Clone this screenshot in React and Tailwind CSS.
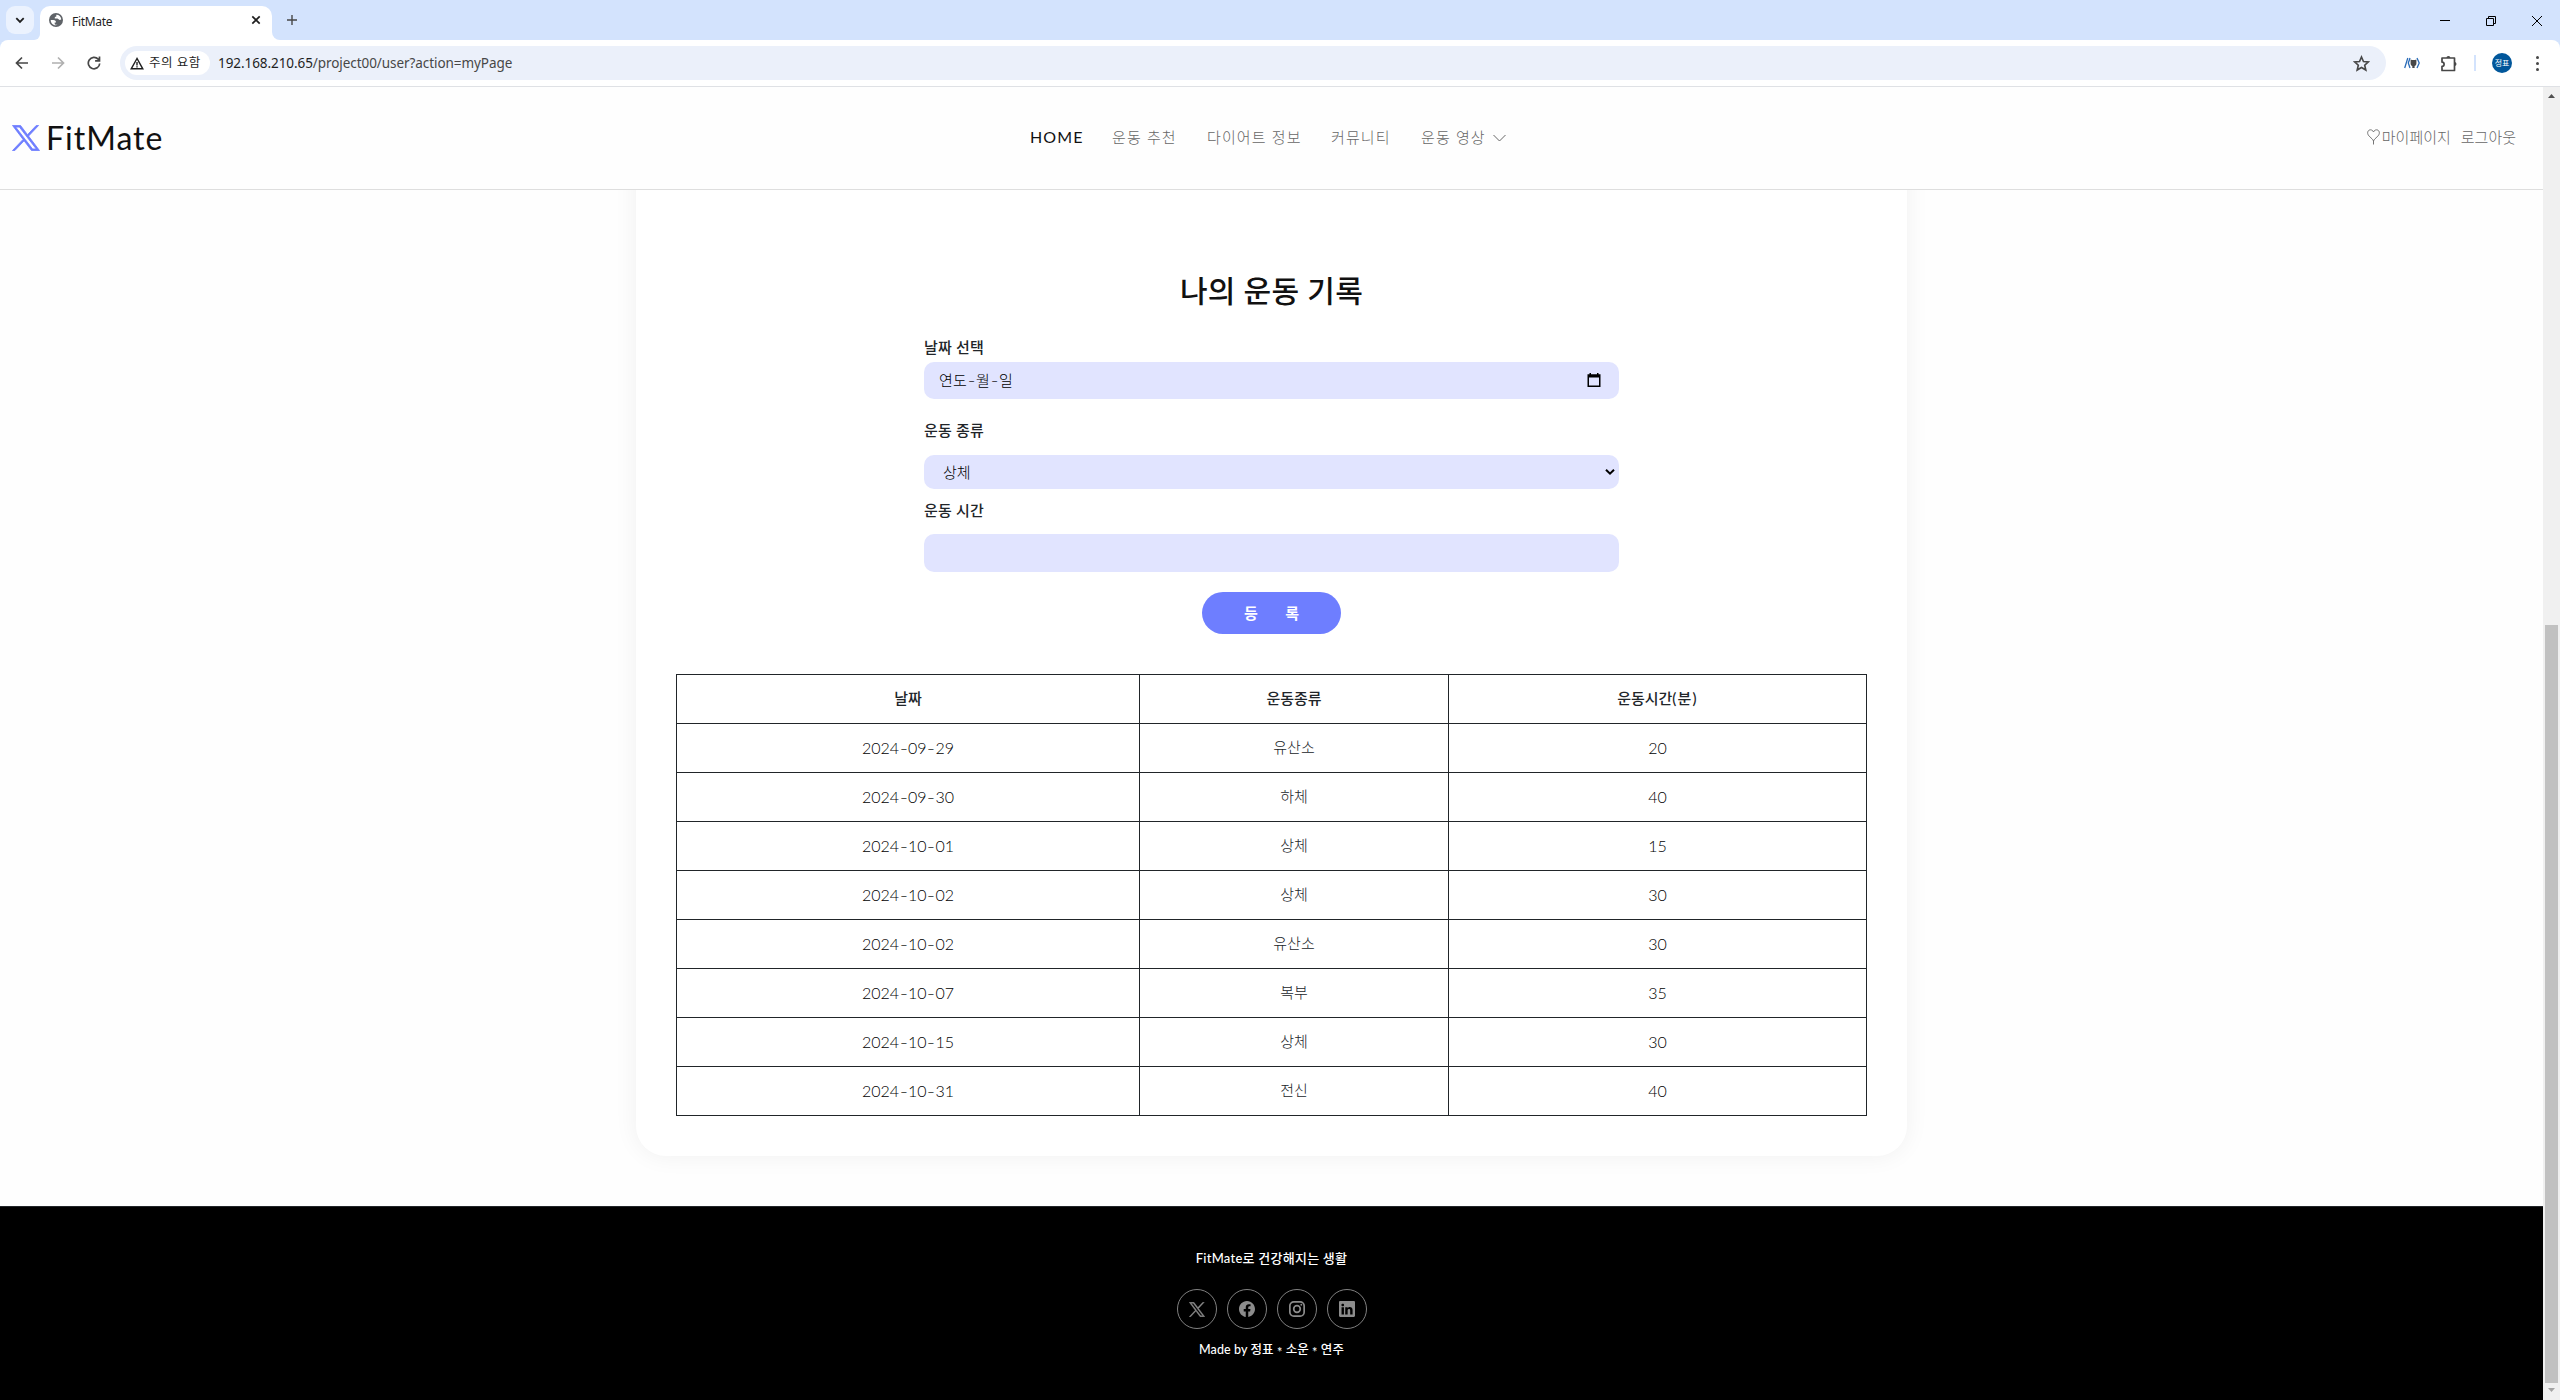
const rows = [
  ["2024-09-29", "유산소", "20"],
  ["2024-09-30", "하체", "40"],
  ["2024-10-01", "상체", "15"],
  ["2024-10-02", "상체", "30"],
  ["2024-10-02", "유산소", "30"],
  ["2024-10-07", "복부", "35"],
  ["2024-10-15", "상체", "30"],
  ["2024-10-31", "전신", "40"],
];

const X_PATH =
  "M14.095479,10.316482L22.286354,1h-1.940718l-7.115352,8.087682L7.551414,1H1l8.589488,12.231093L1,23h1.940717l7.509372,-8.542861L16.448587,23H23L14.095479,10.316482zM11.436522,13.338465l-0.871624,-1.218704l-6.924311,-9.68815h2.981339l5.58978,7.82155l0.867949,1.218704l7.26506,10.166271h-2.981339L11.436522,13.338465z";

function XLogo({ className }) {
  return (
    <svg viewBox="0.6 0.6 22.8 22.8" preserveAspectRatio="none" className={className} fill="currentColor" stroke="currentColor" strokeWidth="0.7">
      <path d={X_PATH} />
    </svg>
  );
}

function Globe() {
  return (
    <svg viewBox="0 0 14 14" className="h-[14px] w-[14px] shrink-0">
      <circle cx="7" cy="7" r="7" fill="#5f6368" />
      <path
        d="M7.300 1.700C9.800 1.600 12 3.600 12.300 6.200c-.8.900-2.100.9-2.700.1-.5-.7-.9-.9-1.700-.9H5.800c-.3-1.300.4-1.900 1.600-2-.1-.7-.2-1.100-.1-1.700zM1.700 6.900h2.700c1.800 0 2.700.8 2.600 2.700H5.700v1.700c.9.500 2 .7 3.100.3C6.500 13.300 1.700 11.300 1.700 6.900z"
        fill="white"
      />
    </svg>
  );
}

function TabStrip() {
  return (
    <div className="flex h-10 items-end bg-[#d3e3fd] pl-1.5">
      <div className="mb-1.5 flex h-7 w-7 items-center justify-center rounded-[9px] bg-[#ebf2fe]">
        <svg viewBox="0 0 10 10" className="h-[10px] w-[10px]" fill="none" stroke="#1f1f1f" strokeWidth="1.8">
          <path d="M1.300 3.200 5 6.900l3.700-3.700" />
        </svg>
      </div>
      <div className="flex h-[34px] w-1.5 items-end bg-white">
        <div className="h-[34px] w-1.5 rounded-br-md bg-[#d3e3fd]" />
      </div>
      <div className="flex h-[34px] w-[232px] items-center rounded-t-[10px] bg-white pl-[9px] pr-[9px] pb-1.5">
        <Globe />
        <span className="ml-[9px] mt-[3px] text-[12px] tracking-[-0.3px] text-[#1f1f1f]">FitMate</span>
        <svg viewBox="0 0 10 10" className="ml-auto mr-[2px] h-[10px] w-[10px]" fill="none" stroke="#1f1f1f" strokeWidth="1.7">
          <path d="m1.300 1.300 7.400 7.400M8.700 1.300 1.300 8.700" />
        </svg>
      </div>
      <div className="h-[34px] w-2 bg-white">
        <div className="h-[34px] w-2 rounded-bl-lg bg-[#d3e3fd]" />
      </div>
      <svg viewBox="0 0 10 10" className="ml-[7px] mb-[15px] h-[10px] w-[10px]" fill="none" stroke="#474747" strokeWidth="1.400">
        <path d="M5 0v10M0 5h10" />
      </svg>
      <div className="ml-auto mb-[14px] flex items-center pr-[18px] text-black">
        <svg viewBox="0 0 10 11" className="mr-[36px] h-[11px] w-[10px]" fill="none" stroke="currentColor">
          <path d="M0 5.500h10" />
        </svg>
        <svg viewBox="0 0 10 10" className="mr-[36px] h-[10px] w-[10px]" fill="none" stroke="currentColor">
          <path d="M.5 2.500h7v7h-7zM2.500 2.500v-2h7v7h-2" />
        </svg>
        <svg viewBox="0 0 10 10" className="h-[10px] w-[10px]" fill="none" stroke="currentColor">
          <path d="m0 0 10 10M10 0 0 10" />
        </svg>
      </div>
    </div>
  );
}

function Toolbar() {
  return (
    <div className="bg-[#d3e3fd]">
      <div className="flex h-[46px] items-center rounded-t-lg bg-white pl-[15px] pr-[21px] text-[#474747]">
        <svg viewBox="0 0 14 14" className="h-[14px] w-[14px]" fill="none" stroke="currentColor" strokeWidth="1.700">
          <path d="M13 7H2M7 1.500 1.500 7 7 12.500" />
        </svg>
        <svg viewBox="0 0 14 14" className="ml-[22px] h-[14px] w-[14px] text-[#b0b0b0]" fill="none" stroke="currentColor" strokeWidth="1.700">
          <path d="M1 7h11M7 1.500 12.500 7 7 12.500" />
        </svg>
        <svg viewBox="0 0 14 14" className="ml-[22px] h-[14px] w-[14px]" fill="none" stroke="currentColor" strokeWidth="1.700">
          <path d="M12.700 7.500A5.700 5.700 0 1 1 11.200 3.200l1.300 1.500M12.500.5v4.400H8.100" />
        </svg>
        <div className="ml-[19px] flex h-[34px] w-[2266px] items-center rounded-full bg-[#ebf0fa] pl-[5px] pr-4">
          <div className="flex h-6 w-[85px] items-center rounded-full bg-white pl-[5px] text-[#1f1f1f]">
            <svg viewBox="0 0 14 13" className="h-[13px] w-[14px]" fill="none" stroke="currentColor" strokeWidth="1.400">
              <path d="M7 1.500 1.200 11.800h11.600zM7 5v3.500M7 9.300v1.300" />
            </svg>
            <span className="ml-[5px] whitespace-nowrap text-[12.500px] tracking-[0.500px]">주의 요함</span>
          </div>
          <span className="ml-[8px] whitespace-nowrap text-[13.500px] tracking-[-0.070px] text-[#1f1f1f]">
            192.168.210.65<span className="text-[#474747]">/project00/user?action=myPage</span>
          </span>
          <svg viewBox="0 0 24 24" className="ml-auto h-[17px] w-[17px]" fill="none" stroke="currentColor" strokeWidth="2.300">
            <path d="m12 2.800 2.800 6.400 6.900.6-5.200 4.600 1.600 6.800-6.100-3.600-6.100 3.600 1.600-6.800-5.200-4.600 6.900-.6z" />
          </svg>
        </div>
        <svg viewBox="0 0 16 12" className="ml-[18px] h-3 w-4" fill="none" stroke="#2b6cb8" strokeWidth="1.300">
          <path d="M.7 11 3.800 1M6 1 4.300 6 6 11M13 1l2.200 5L13 11" />
          <path d="M6.600 2.500 8 3.100h3l1.400-.6v4c0 1.500-1 2.200-1.800 2.400v2.100H8.300V9C7.500 8.800 6.600 8 6.600 6.500z" fill="#474747" stroke="none" />
        </svg>
        <svg viewBox="0 0 17 17" className="ml-5 h-[17px] w-[17px]" fill="none" stroke="currentColor" strokeWidth="1.700">
          <path d="M2 3h12.500v12.500H2v-4.200a2.100 2.100 0 0 0 0-4.200z" strokeLinejoin="round" />
          <path d="M6.400 3a2 2 0 0 1 4 0zM14.500 7.100a2 2 0 0 1 0 4z" fill="currentColor" stroke="none" />
        </svg>
        <div className="ml-[17px] h-4 w-[2px] bg-[#d3e3fd]" />
        <div className="ml-4 flex h-5 w-5 items-center justify-center rounded-full bg-[#01579b] text-[8px] text-white">정표</div>
        <div className="ml-auto flex w-[3px] flex-col gap-[3px]">
          <i className="h-[3px] w-[3px] rounded-full bg-[#474747]" />
          <i className="h-[3px] w-[3px] rounded-full bg-[#474747]" />
          <i className="h-[3px] w-[3px] rounded-full bg-[#474747]" />
        </div>
      </div>
      <div className="h-px bg-[#dfe1e5]" />
    </div>
  );
}

function Header() {
  return (
    <header className="relative z-10 flex h-[103px] items-center border-b border-[#dedede] bg-[#fefefe]">
      <div className="flex w-[1030px] items-center pl-[12px]">
        <XLogo className="h-[26px] w-[28px] text-[#6e7eff]" />
        <span className="-mt-px ml-[6px] text-[32px] leading-none tracking-[1px] text-[#111]">FitMate</span>
      </div>
      <nav className="flex items-center whitespace-nowrap pb-[2px] text-[15px] font-light tracking-[1.1px] text-[#666]">
        <span className="w-[82px] text-[16px] font-normal text-[#111]">HOME</span>
        <span className="w-[95px]">운동 추천</span>
        <span className="w-[124px]">다이어트 정보</span>
        <span className="w-[90px]">커뮤니티</span>
        <span className="w-[72px]">운동 영상</span>
        <svg viewBox="0 0 13 8" className="mt-[2px] h-2 w-[13px]" fill="none" stroke="currentColor" strokeWidth="1">
          <path d="M.5 1l6 6 6-6" />
        </svg>
      </nav>
      <div className="ml-auto flex items-center whitespace-nowrap pr-[27px] pb-[2px] text-[15px] font-light text-[#666]">
        <svg viewBox="0 0 13 16" className="h-4 w-[13px]" fill="none" stroke="currentColor" strokeWidth="0.9">
          <path d="M6.500 3C5.500.3 1.500-.2.700 3.200c-.6 4 4.500 5.500 5.800 8.800 1.300-3.300 6.400-4.800 5.800-8.800C11.500-.2 7.500.3 6.500 3zM6.500 12V15.500" />
        </svg>
        <span className="ml-[2px]">마이페이지</span>
        <span className="ml-[10px]">로그아웃</span>
      </div>
    </header>
  );
}

function Hyphenated({ text }) {
  return text.split("-").map((part, i) => (
    <span key={i}>
      {i > 0 && <span className="mx-[1.500px] inline-block scale-x-[1.400]">-</span>}
      {part}
    </span>
  ));
}

function RecordForm() {
  return (
    <form className="flex w-[695px] flex-col whitespace-nowrap text-[15px] text-[#212529]">
      <label className="h-[28px] font-medium leading-[27px] tracking-[0.2px]">날짜 선택</label>
      <div className="flex h-[37px] items-center rounded-[10px] bg-[#e1e4ff] pl-[15px] pr-[18px] text-black">
        <span className="pb-px font-light tracking-[0.3px]">
          <Hyphenated text="연도-월-일" />
        </span>
        <svg viewBox="0 0 14 14" className="ml-auto mb-[2px] h-[14px] w-[14px]" fill="black">
          <path d="M2.500 0h1.500v1.200h6V0h1.500v1.200H13.500V14H.5V1.200h2zM2 4.600v8h10v-8z" fillRule="evenodd" />
        </svg>
      </div>
      <label className="mt-[18px] h-[28px] font-medium leading-[27px] tracking-[0.2px]">운동 종류</label>
      <div className="mt-[10px] flex h-[34px] items-center rounded-[10px] bg-[#e1e4ff] pl-[19px] pr-[4px]">
        <span className="font-light text-black">상체</span>
        <svg viewBox="0 0 10 8" className="ml-auto h-2 w-[10px]" fill="none" stroke="black" strokeWidth="2">
          <path d="m1 1.700 4 4 4-4" />
        </svg>
      </div>
      <label className="mt-2 h-[28px] font-medium leading-[27px] tracking-[0.2px]">운동 시간</label>
      <div className="mt-[9px] h-[38px] rounded-[10px] bg-[#e1e4ff]" />
      <button type="button" className="mt-5 h-[42px] w-[139px] self-center rounded-full bg-[#6e7eff] text-[15px] font-bold text-white">
        <span className="flex justify-between px-[42px]">
          <span>등</span>
          <span>록</span>
        </span>
      </button>
    </form>
  );
}

function RecordTable() {
  return (
    <div className="mt-[40px] w-[1191px] border-l border-t border-[#212529] text-center text-[15px] text-[#212529]">
      <div className="grid h-[49px] grid-cols-[463px_309px_418px] font-medium leading-[47px]">
        <div className="border-b border-r border-[#212529]">날짜</div>
        <div className="border-b border-r border-[#212529]">운동종류</div>
        <div className="border-b border-r border-[#212529]">
          운동시간<span className="tracking-[1.200px]">(분)</span>
        </div>
      </div>
      {rows.map((r, i) => (
        <div key={i} className="grid h-[49px] grid-cols-[463px_309px_418px] font-light leading-[47px]">
          <div className="border-b border-r border-[#212529] text-[16px] text-black">
            <Hyphenated text={r[0]} />
          </div>
          <div className="border-b border-r border-[#212529]">{r[1]}</div>
          <div className="border-b border-r border-[#212529] text-[16px] text-black">{r[2]}</div>
        </div>
      ))}
    </div>
  );
}

function Social({ children }) {
  return (
    <div className="flex h-10 w-10 items-center justify-center rounded-full border border-[#808080] text-[#8c8c8c]">
      {children}
    </div>
  );
}

function Footer() {
  return (
    <footer className="flex h-[194px] flex-col items-center whitespace-nowrap border-t border-[#212529] bg-black text-white">
      <p className="mt-[39px] h-6 text-[13px] font-medium leading-6 tracking-[0.250px]">FitMate로 건강해지는 생활</p>
      <div className="mt-[19px] flex gap-[10px]">
        <Social>
          <XLogo className="h-[15px] w-[16px]" />
        </Social>
        <Social>
          <svg viewBox="0 0 16 16" className="h-4 w-4" fill="currentColor">
            <path d="M16 8.049c0-4.446-3.582-8.050-8-8.050C3.580 0-.002 3.603-.002 8.050c0 4.017 2.926 7.347 6.750 7.951v-5.625h-2.030V8.050H6.750V6.275c0-2.017 1.195-3.131 3.022-3.131.876 0 1.791.157 1.791.157v1.980h-1.009c-.993 0-1.303.621-1.303 1.258v1.510h2.218l-.354 2.326H9.250V16c3.824-.604 6.750-3.934 6.750-7.951" />
          </svg>
        </Social>
        <Social>
          <svg viewBox="0 0 16 16" className="h-4 w-4" fill="none" stroke="currentColor" strokeWidth="1.700">
            <rect x=".85" y=".85" width="14.300" height="14.300" rx="4" />
            <circle cx="8" cy="8" r="3.300" />
            <circle cx="12.300" cy="3.700" r=".95" fill="currentColor" stroke="none" />
          </svg>
        </Social>
        <Social>
          <svg viewBox="0 0 16 16" className="h-4 w-4" fill="currentColor">
            <path d="M0 1.146C0 .513.526 0 1.175 0h13.650C15.474 0 16 .513 16 1.146v13.708c0 .633-.526 1.146-1.175 1.146H1.175C.526 16 0 15.487 0 14.854zm4.943 12.248V6.169H2.542v7.225zm-1.200-8.212c.837 0 1.358-.554 1.358-1.248-.015-.709-.520-1.248-1.342-1.248S2.400 3.226 2.400 3.934c0 .694.521 1.248 1.327 1.248zm4.908 8.212V9.359c0-.216.016-.432.080-.586.173-.431.568-.878 1.232-.878.869 0 1.216.662 1.216 1.634v3.865h2.401V9.250c0-2.220-1.184-3.252-2.764-3.252-1.274 0-1.845.7-2.165 1.193v.025h-.016l.016-.025V6.169h-2.400c.030.678 0 7.225 0 7.225z" />
          </svg>
        </Social>
      </div>
      <p className="mt-[9px] h-6 text-[12.500px] font-medium leading-6 tracking-[0.100px]">
        Made by 정표 <span className="inline-block translate-y-[3px]">*</span> 소운{" "}
        <span className="inline-block translate-y-[3px]">*</span> 연주
      </p>
    </footer>
  );
}

export default function App() {
  return (
    <div className="flex h-[1400px] w-[2560px] flex-col overflow-hidden bg-[#fefefe] font-['Lato','Noto_Sans_CJK_KR',sans-serif]">
      <div className="font-['Noto_Sans','Noto_Sans_CJK_KR',sans-serif]">
        <TabStrip />
        <Toolbar />
      </div>
      <div className="flex flex-1">
        <div className="flex w-[2543px] flex-col">
          <Header />
          <main className="flex h-[1016px] flex-col items-center overflow-hidden">
            <section className="-mt-[60px] flex h-[1026px] w-[1271px] shrink-0 flex-col items-center rounded-b-[30px] bg-white pt-[60px] shadow-[0_0_25px_rgba(0,0,0,0.06)]">
              <h2 className="mt-[75px] h-[52px] whitespace-nowrap text-[30px] font-medium leading-[50px] tracking-[0.3px] text-[#111]">나의 운동 기록</h2>
              <div className="h-[17px]" />
              <RecordForm />
              <RecordTable />
            </section>
          </main>
          <Footer />
        </div>
        <div className="flex w-[17px] flex-col items-center bg-[#f0f0f0] pt-[7px] pb-[8px]">
          <svg viewBox="0 0 7 4" className="h-1 w-[7px]" fill="#505050"><path d="M3.500 0 7 4H0z" /></svg>
          <div className="mt-[527px] h-[758px] w-[13px] bg-[#c1c1c1]" />
          <svg viewBox="0 0 7 4" className="mt-auto h-1 w-[7px]" fill="#a3a3a3"><path d="M3.500 4 7 0H0z" /></svg>
        </div>
      </div>
    </div>
  );
}
